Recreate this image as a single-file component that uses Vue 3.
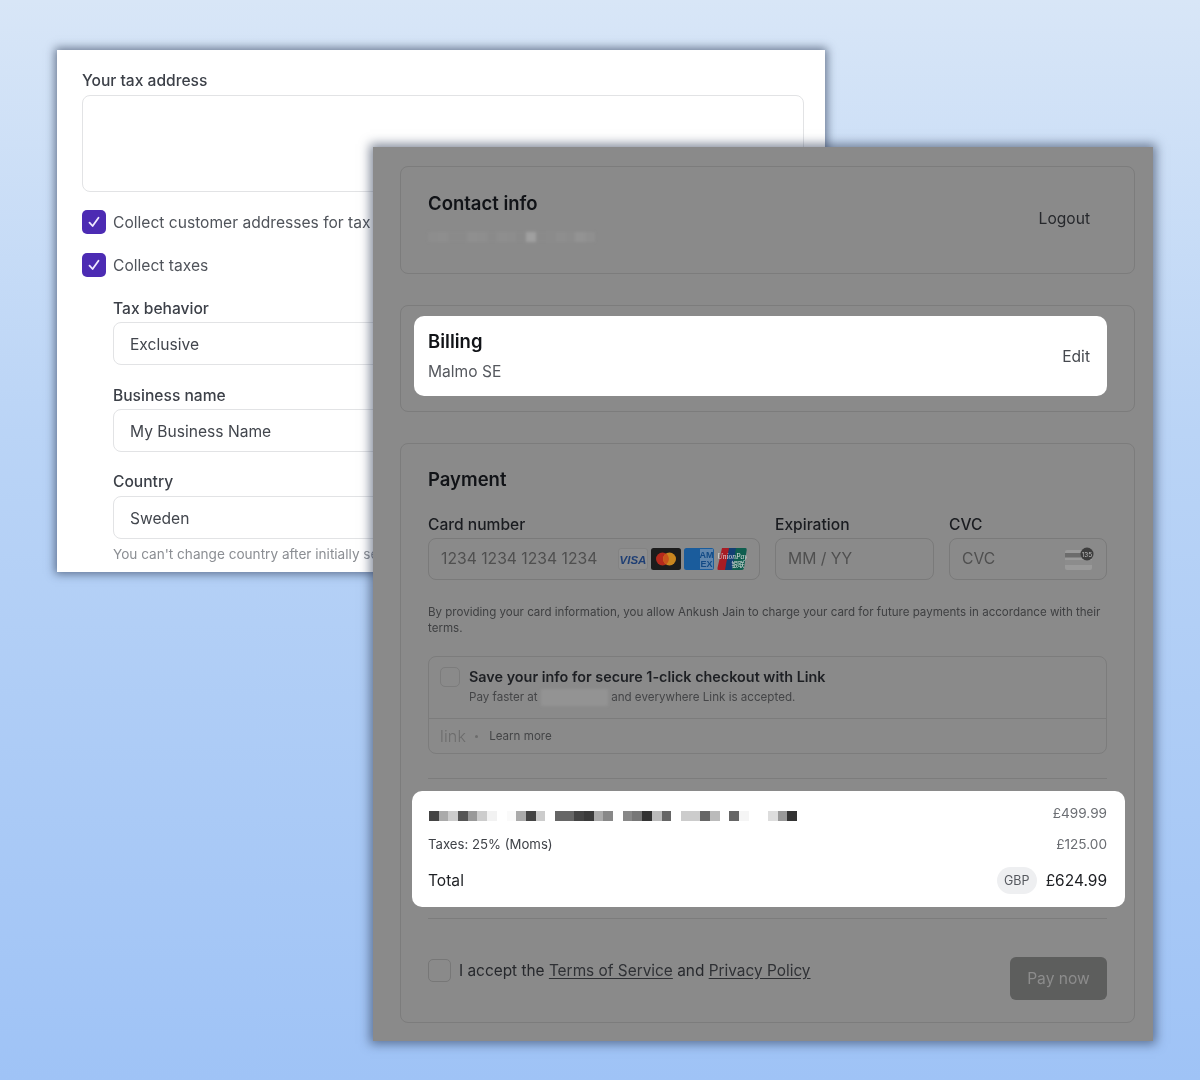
<script setup>
const productCells = [
  '#444', '#aaa', '#ccc', '#555', '#999', '#ccc', '#f2f2f2', '#fff', '#fafafa', '#aaa', '#444', '#ccc', '#fff',
  '#666', '#666', '#444', '#3a3a3a', '#aaa', '#888', '#fff', '#888', '#777', '#333', '#bbb', '#666', '#fff',
  '#ccc', '#ccc', '#666', '#bbb', '#fff', '#666', '#f5f5f5', '#fff', '#fff', '#ddd', '#999', '#333'
]
const emailCells = [
  '#8d8d8d', '#8e8e8e', '#8a8a8a', '#8a8a8a', '#8f8f8f', '#8e8e8e', '#8a8a8a', '#8e8e8e', '#8d8d8d', '#8a8a8a',
  '#a0a0a0', '#8a8a8a', '#8b8b8b', '#8e8e8e', '#8c8c8c', '#939393', '#8f8f8f'
]
</script>

<template>
  <div class="page">
    <section class="window back">
      <label class="label">Your tax address</label>
      <div class="textarea"></div>
      <div class="check-row first">
        <span class="check">
          <svg width="14" height="14" viewBox="0 0 14 14"><path d="M2.5 7.6 5.6 11 11.5 2.8" fill="none" stroke="#efe9ff" stroke-width="1.8" stroke-linecap="round" stroke-linejoin="round"/></svg>
        </span>
        <span>Collect customer addresses for tax calculation</span>
      </div>
      <div class="check-row second">
        <span class="check">
          <svg width="14" height="14" viewBox="0 0 14 14"><path d="M2.5 7.6 5.6 11 11.5 2.8" fill="none" stroke="#efe9ff" stroke-width="1.8" stroke-linecap="round" stroke-linejoin="round"/></svg>
        </span>
        <span>Collect taxes</span>
      </div>
      <div class="nested">
        <label class="label">Tax behavior</label>
        <div class="field">Exclusive</div>
        <label class="label gap">Business name</label>
        <div class="field">My Business Name</div>
        <label class="label gap country">Country</label>
        <div class="field">Sweden</div>
        <p class="hint">You can't change country after initially setting it</p>
      </div>
    </section>

    <section class="window front">
      <div class="card contact">
        <div class="contact-text">
          <h2>Contact info</h2>
          <div class="email-blur">
            <i v-for="(c, i) in emailCells" :key="i" :style="{ background: c }"></i>
          </div>
        </div>
        <span class="logout">Logout</span>
      </div>

      <div class="card billing-card">
        <div class="billing">
          <div>
            <h2>Billing</h2>
            <div class="city">Malmo SE</div>
          </div>
          <span class="edit">Edit</span>
        </div>
      </div>

      <div class="card payment">
        <h2>Payment</h2>
        <div class="card-grid">
          <div class="col">
            <div class="field-label">Card number</div>
            <div class="input">
              <span>1234 1234 1234 1234</span>
              <div class="brands">
                <svg width="30" height="22" viewBox="0 0 30 22"><rect x=".5" y=".5" width="29" height="21" rx="2.5" fill="#8f8f8f" stroke="#838383"/><text x="15" y="15.5" text-anchor="middle" font-family="Liberation Sans" font-size="11.5" font-weight="700" font-style="italic" fill="#1f3f74">VISA</text></svg>
                <svg width="30" height="22" viewBox="0 0 30 22"><rect width="30" height="22" rx="2.5" fill="#1c1c1c"/><circle cx="11.5" cy="11" r="6.5" fill="#b5291c"/><circle cx="18.5" cy="11" r="6.5" fill="#c9861f"/><path d="M15 5.6a6.5 6.5 0 0 1 0 10.8 6.5 6.5 0 0 1 0-10.8z" fill="#c8541c"/></svg>
                <svg width="30" height="22" viewBox="0 0 30 22"><rect width="30" height="22" rx="2.5" fill="#1a5c9c"/><rect x="16" y="1" width="13" height="20" fill="#9aa9bb" opacity=".55"/><text x="22.5" y="10" text-anchor="middle" font-family="Liberation Sans" font-size="9" font-weight="700" fill="#124a85">AM</text><text x="22.5" y="18.5" text-anchor="middle" font-family="Liberation Sans" font-size="9" font-weight="700" fill="#124a85">EX</text></svg>
                <svg width="30" height="22" viewBox="0 0 30 22"><path d="M5 0h9l-4 22H1.500Q0 22 .5 20z" fill="#a81c24"/><path d="M12 0h9l-4 22H8z" fill="#123f73"/><path d="M19 0h9.500q1.500 0 1.200 2L27 20q-.4 2-2 2h-10z" fill="#0f5e4f"/><text x="15.500" y="10.500" text-anchor="middle" font-family="Liberation Serif" font-size="7.500" font-style="italic" fill="#dcdcdc">UnionPay</text><text x="21" y="18.500" text-anchor="middle" font-family="Noto Sans CJK SC" font-size="6.500" fill="#dcdcdc">银联</text></svg>
              </div>
            </div>
          </div>
          <div class="col">
            <div class="field-label">Expiration</div>
            <div class="input"><span>MM / YY</span></div>
          </div>
          <div class="col">
            <div class="field-label">CVC</div>
            <div class="input">
              <span>CVC</span>
              <svg width="30" height="24" viewBox="0 0 30 24"><rect x="1" y="3" width="27" height="20" rx="2" fill="#9a9a9a"/><rect x="1" y="6" width="27" height="4.500" fill="#6c6c6c"/><rect x="1" y="13" width="27" height="5" fill="#8c8c8c"/><circle cx="23" cy="7" r="6.500" fill="#3d3d3d"/><text x="23" y="9.500" text-anchor="middle" font-family="Inter" font-size="6.500" fill="#bbb">135</text></svg>
            </div>
          </div>
        </div>

        <p class="consent">By providing your card information, you allow Ankush Jain to charge your card for future payments in accordance with their terms.</p>

        <div class="link-box">
          <div class="link-main">
            <span class="small-check"></span>
            <div>
              <div class="link-title">Save your info for secure 1-click checkout with Link</div>
              <div class="link-sub">Pay faster at <span class="name-blur"></span> and everywhere Link is accepted.</div>
            </div>
          </div>
          <div class="link-foot">
            <span class="link-logo">link</span>
            <span class="dot"></span>
            <span>Learn more</span>
          </div>
        </div>

        <hr class="rule top-rule" />

        <div class="summary">
          <div class="sum-row product">
            <div class="pixels">
              <i v-for="(c, i) in productCells" :key="i" :style="{ background: c }"></i>
            </div>
            <span class="amount">£499.99</span>
          </div>
          <div class="sum-row taxes">
            <span>Taxes: 25% (Moms)</span>
            <span class="amount">£125.00</span>
          </div>
          <div class="sum-row total">
            <span>Total</span>
            <div class="total-right">
              <span class="badge">GBP</span>
              <span class="grand">£624.99</span>
            </div>
          </div>
        </div>

        <hr class="rule bottom-rule" />

        <div class="footer">
          <div class="accept">
            <span class="accept-check"></span>
            <span>I accept the <u>Terms of Service</u> and <u>Privacy Policy</u></span>
          </div>
          <button class="pay">Pay now</button>
        </div>
      </div>
    </section>
  </div>
</template>

<style>
html, body {
  margin: 0;
  background: #a5c7f6;
}
</style>

<style scoped>
.page {
  position: relative;
  width: 1200px;
  height: 1080px;
  overflow: hidden;
  background: linear-gradient(180deg, #d8e6f7 0%, #bad4f6 40%, #9fc3f6 100%);
  font-family: Inter, "Liberation Sans", sans-serif;
  font-size: 15.6px;
  color: #3e4249;
  filter: blur(0.3px);
}
.window {
  position: absolute;
  box-sizing: border-box;
}
.back {
  left: 57px;
  top: 50px;
  width: 768px;
  height: 522px;
  overflow: hidden;
  background: #fff;
  padding: 21px 21px 0 25px;
  box-shadow: 0 0 9px 2px rgba(45, 58, 85, 0.65);
}
.label {
  display: block;
  height: 20px;
  line-height: 20px;
  font-weight: 500;
  color: #3c4048;
}
.nested .label {
  line-height: 22px;
}
.label.gap {
  margin-top: 20px;
}
.label.country {
  margin-top: 19px;
}
.textarea {
  box-sizing: border-box;
  height: 97px;
  margin-top: 4px;
  border: 1px solid #e2e3e5;
  border-radius: 8px;
}
.check-row {
  display: flex;
  align-items: center;
  gap: 7px;
  height: 24px;
  color: #50545b;
  white-space: nowrap;
}
.check-row.first {
  margin-top: 18px;
}
.check-row.second {
  margin-top: 19px;
}
.check {
  display: flex;
  align-items: center;
  justify-content: center;
  width: 24px;
  height: 24px;
  border-radius: 5px;
  background: #4c2bb3;
}
.nested {
  margin: 21px 0 0 31px;
}
.field {
  box-sizing: border-box;
  height: 43px;
  margin-top: 4px;
  padding-left: 16px;
  border: 1px solid #e2e3e5;
  border-radius: 8px;
  line-height: 44px;
  color: #42464d;
}
.country + .field {
  margin-top: 5px;
}
.hint {
  margin: 6px 0 0;
  font-size: 13.6px;
  line-height: 18px;
  color: #8b8e93;
  white-space: nowrap;
}

.front {
  left: 373px;
  top: 147px;
  width: 780px;
  height: 894px;
  padding: 19px 18px 0 27px;
  background: #8a8a8a;
  box-shadow: 0 0 10px 3px rgba(45, 58, 85, 0.6);
}
.card {
  box-sizing: border-box;
  border: 1px solid #7c7c7c;
  border-radius: 8px;
}
h2 {
  margin: 0;
  font-size: 18.5px;
  font-weight: 600;
  line-height: 24px;
  color: #111317;
}
.contact {
  display: flex;
  align-items: center;
  justify-content: space-between;
  height: 108px;
  padding: 0 44px 0 27px;
}
.contact-text {
  align-self: flex-start;
  margin-top: 24px;
}
.email-blur {
  display: flex;
  width: 167px;
  height: 10px;
  margin-top: 17px;
  filter: blur(1.5px);
}
.email-blur i {
  flex: 1;
}
.logout {
  margin-top: -4px;
  color: #26282c;
}
.billing-card {
  height: 107px;
  margin-top: 31px;
  padding: 10px 27px 0 13px;
}
.billing {
  display: flex;
  align-items: center;
  justify-content: space-between;
  height: 80px;
  padding: 0 17px 0 14px;
  background: #fff;
  border-radius: 10px;
}
.city {
  margin-top: 8px;
  line-height: 22px;
  color: #55585e;
}
.edit {
  color: #46494f;
}
.payment {
  height: 580px;
  margin-top: 31px;
  padding: 23px 27px 0;
}
.card-grid {
  display: grid;
  grid-template-columns: 332px 159px 158px;
  gap: 15px;
  margin-top: 24px;
}
.field-label {
  height: 20px;
  line-height: 20px;
  font-weight: 500;
  color: #1a1c20;
}
.input {
  display: flex;
  align-items: center;
  justify-content: space-between;
  box-sizing: border-box;
  height: 42px;
  margin-top: 3px;
  padding: 0 12px;
  border: 1px solid #7a7a7a;
  border-radius: 8px;
  font-size: 15.7px;
  color: #4f4f4f;
  white-space: nowrap;
}
.input > span {
  margin-top: -1px;
}
.brands {
  display: flex;
  gap: 3px;
}
.consent {
  margin: 24px 0 0;
  font-size: 11.55px;
  line-height: 16px;
  color: #3f4042;
}
.link-box {
  box-sizing: border-box;
  height: 98px;
  margin-top: 20px;
  border: 1px solid #7c7c7c;
  border-radius: 8px;
}
.link-main {
  display: flex;
  gap: 9px;
  height: 62px;
  box-sizing: border-box;
  padding: 10px 11px 0;
  border-bottom: 1px solid #7c7c7c;
}
.small-check {
  flex: none;
  box-sizing: border-box;
  width: 20px;
  height: 20px;
  border: 1px solid #7c7c7c;
  border-radius: 5px;
}
.link-title {
  font-size: 14.38px;
  font-weight: 600;
  line-height: 20px;
  color: #1d1f23;
}
.link-sub {
  margin-top: 2px;
  font-size: 11.6px;
  line-height: 17px;
  color: #444547;
}
.name-blur {
  display: inline-block;
  width: 67px;
  height: 17px;
  vertical-align: -5px;
  background: #939393;
  filter: blur(1.5px);
}
.link-foot {
  display: flex;
  align-items: center;
  height: 34px;
  padding-left: 11px;
  font-size: 11.6px;
  color: #444547;
}
.link-logo {
  font-size: 16px;
  font-weight: 300;
  letter-spacing: 0.2px;
  color: #6c6c6c;
}
.dot {
  width: 3px;
  height: 3px;
  margin: 0 11px 0 9px;
  border-radius: 50%;
  background: #6c6c6c;
}
.rule {
  height: 1px;
  margin: 0;
  border: 0;
  background: #7c7c7c;
}
.top-rule {
  margin-top: 24px;
}
.summary {
  box-sizing: border-box;
  height: 116px;
  margin: 12px -18px 0 -16px;
  padding: 13px 18px 0 16px;
  background: #fff;
  border-radius: 10px;
}
.sum-row {
  display: flex;
  align-items: center;
  justify-content: space-between;
}
.product {
  height: 20px;
}
.pixels {
  display: flex;
  margin: 4px 0 0 1px;
}
.pixels i {
  width: 9.700px;
  height: 10px;
}
.amount {
  font-size: 13.6px;
  color: #6a6d72;
}
.product .amount {
  margin-top: -2px;
}
.taxes {
  height: 20px;
  margin-top: 10px;
  font-size: 13.2px;
  color: #3f4248;
}
.total {
  height: 28px;
  margin-top: 12px;
  color: #1d1f23;
}
.total-right {
  display: flex;
  align-items: center;
  gap: 9px;
}
.grand {
  font-size: 15.5px;
}
.badge {
  box-sizing: border-box;
  width: 40px;
  height: 27px;
  line-height: 27px;
  text-align: center;
  font-size: 12.500px;
  color: #55585e;
  background: #eeeff1;
  border-radius: 14px;
}
.bottom-rule {
  margin-top: 11px;
}
.footer {
  display: flex;
  justify-content: space-between;
  margin-top: 38px;
}
.accept {
  display: flex;
  align-items: center;
  gap: 8px;
  height: 27px;
  font-size: 15.4px;
  color: #26282c;
}
.accept-check {
  box-sizing: border-box;
  width: 23px;
  height: 23px;
  border: 1px solid #777;
  border-radius: 5px;
}
.accept u {
  color: #2f3135;
  text-underline-offset: 2px;
}
.pay {
  width: 97px;
  height: 43px;
  padding: 0;
  border: 0;
  border-radius: 6px;
  background: #5d5e5d;
  color: #8c8c8c;
  font-family: inherit;
  font-size: 15.6px;
}
</style>
